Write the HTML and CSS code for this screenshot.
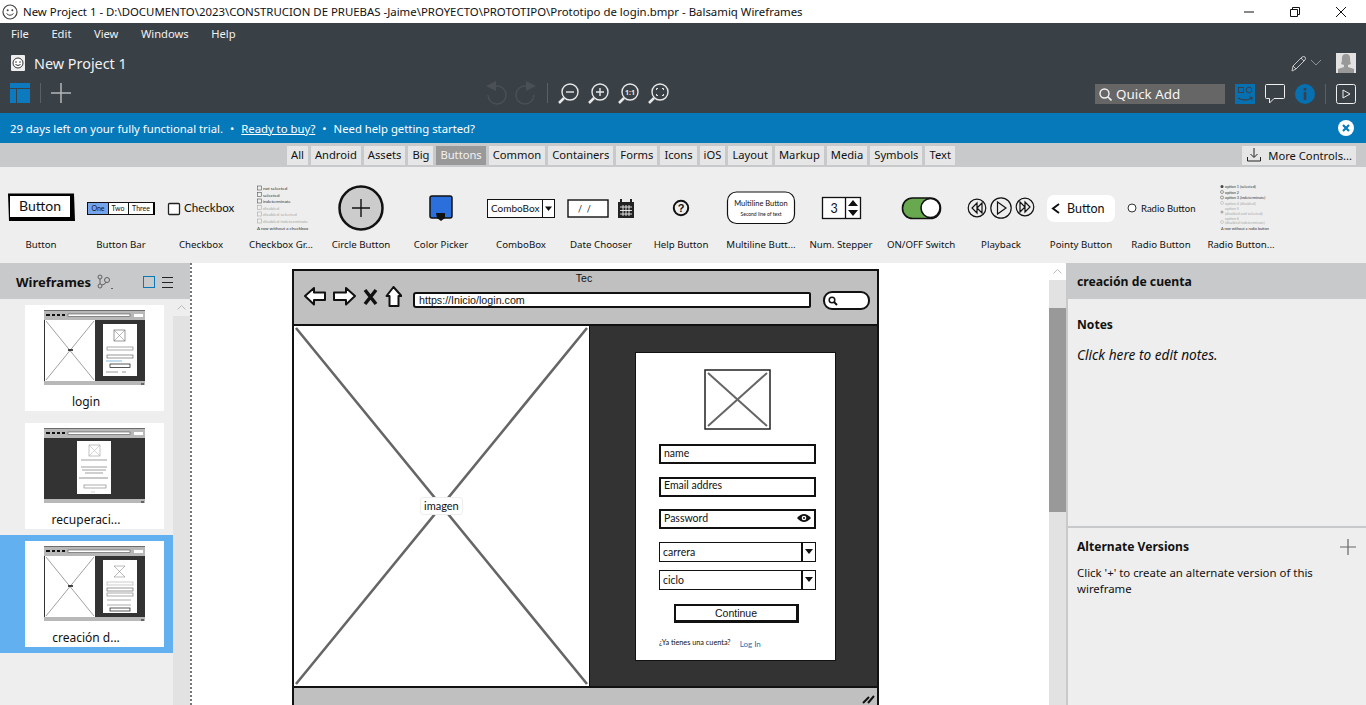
FILE: index.html
```html
<!DOCTYPE html>
<html lang="en">
<head>
    <meta charset="UTF-8">
    <meta name="viewport" content="width=device-width, initial-scale=1.0">
    <title>Balsamiq Wireframes</title>
    <link rel="stylesheet" href="styles.css">
</head>
<body>
    <!-- Window title -->
    <header class="titlebar">
        <svg class="title-icon" width="16" height="16" viewBox="0 0 16 16"><circle cx="8" cy="8" r="7" fill="#fff" stroke="#444" stroke-width="1.2"/><circle cx="5.7" cy="6.2" r="1" fill="#444"/><circle cx="10.3" cy="6.2" r="1" fill="#444"/><path d="M4.5 9.5q3.500 3.500 7 0" fill="none" stroke="#444"/></svg>
        <span class="title-text">New Project 1 - D:\DOCUMENTO\2023\CONSTRUCION DE PRUEBAS -Jaime\PROYECTO\PROTOTIPO\Prototipo de login.bmpr - Balsamiq Wireframes</span>
        <div class="window-btns">
            <svg width="12" height="12" viewBox="0 0 12 12"><path d="M1 6h10" stroke="#111" fill="none"/></svg>
            <svg width="12" height="12" viewBox="0 0 12 12"><path d="M1.500 3.500h7v7h-7zM3.500 3.500v-2h7v7h-2" stroke="#111" fill="none"/></svg>
            <svg width="12" height="12" viewBox="0 0 12 12"><path d="M1 1l10 10M11 1L1 11" stroke="#111" fill="none"/></svg>
        </div>
    </header>

    <!-- Dark app bar -->
    <section class="appbar">
        <nav class="menu">
            <span>File</span><span>Edit</span><span>View</span><span>Windows</span><span>Help</span>
        </nav>
        <div class="project-row">
            <svg width="14" height="16" viewBox="0 0 14 16"><rect x="0" y="0" width="14" height="16" rx="1" fill="#eee"/><circle cx="7" cy="8" r="5" fill="#fff" stroke="#333"/><circle cx="5" cy="7" r=".8" fill="#333"/><circle cx="9" cy="7" r=".8" fill="#333"/><path d="M4.500 9.500q2.500 2 5 0" fill="none" stroke="#333"/></svg>
            <span class="project-name">New Project 1</span>
            <div class="project-right">
                <svg width="16" height="17" viewBox="0 0 16 17"><path d="M1 16l1-5L11 2q2-1 3 0t0 3l-9 9zM2 11l3 3M10 3l3 3" fill="none" stroke="#c4c6c8"/></svg>
                <svg width="10" height="6" viewBox="0 0 10 6"><path d="M0 0l5 5 5-5" fill="none" stroke="#8d9195"/></svg>
                <svg class="avatar" width="20" height="20" viewBox="0 0 20 20"><rect width="20" height="20" fill="#e2e2e2"/><path d="M6 5q0-4 4-4t4 4q0 4 1 6l-3 1v2l6 2v4H2v-4l6-2v-2l-3-1q1-2 1-6z" fill="#999"/></svg>
            </div>
        </div>
        <div class="tool-row">
            <svg width="20" height="20" viewBox="0 0 20 20"><path d="M0 0h20v5H0zM0 6h6v14H0zM7 6h13v14H7z" fill="#0d7ac0"/></svg>
            <i class="sep"></i>
            <svg width="20" height="20" viewBox="0 0 20 20"><path d="M10 0v20M0 10h20" stroke="#b5b7b9" stroke-width="1.500"/></svg>
            <div class="history">
                <svg width="23" height="24" viewBox="0 0 23 24"><path d="M11 0v10L1 5z" fill="#4a5055"/><path d="M11 5a9 9 0 1 1-8 9" fill="none" stroke="#4a5055" stroke-width="1.500"/></svg>
                <svg width="23" height="24" viewBox="0 0 23 24"><path d="M12 0v10L22 5z" fill="#4a5055"/><path d="M12 5a9 9 0 1 0 8 9" fill="none" stroke="#4a5055" stroke-width="1.500"/></svg>
            </div>
            <i class="sep"></i>
            <div class="zooms">
                <svg width="21" height="21" viewBox="0 0 21 21"><circle cx="12" cy="9" r="8" fill="none" stroke="#e8e8e8" stroke-width="1.400"/><path d="M6 15l-5 5" stroke="#e8e8e8" stroke-width="2.500"/><path d="M8 9h8" stroke="#e8e8e8" stroke-width="1.400"/></svg>
                <svg width="21" height="21" viewBox="0 0 21 21"><circle cx="12" cy="9" r="8" fill="none" stroke="#e8e8e8" stroke-width="1.400"/><path d="M6 15l-5 5" stroke="#e8e8e8" stroke-width="2.500"/><path d="M8 9h8M12 5v8" stroke="#e8e8e8" stroke-width="1.400"/></svg>
                <svg width="21" height="21" viewBox="0 0 21 21"><circle cx="12" cy="9" r="8" fill="none" stroke="#e8e8e8" stroke-width="1.400"/><path d="M6 15l-5 5" stroke="#e8e8e8" stroke-width="2.500"/><text class="zoom-one" x="12" y="12" text-anchor="middle">1:1</text></svg>
                <svg width="21" height="21" viewBox="0 0 21 21"><circle cx="12" cy="9" r="8" fill="none" stroke="#e8e8e8" stroke-width="1.400"/><path d="M6 15l-5 5" stroke="#e8e8e8" stroke-width="2.500"/><path d="M8.500 7V5.500H10M14 5.500h1.500V7M15.500 11v1.500H14M10 12.500H8.500V11" fill="none" stroke="#e8e8e8"/></svg>
            </div>
            <div class="tool-right">
                <div class="quick-add">
                    <svg width="13" height="13" viewBox="0 0 13 13"><circle cx="5.500" cy="5.500" r="4.500" fill="none" stroke="#f2f2f2" stroke-width="1.400"/><path d="M8.800 8.800L12.500 12.500" stroke="#f2f2f2" stroke-width="1.600"/></svg>
                    <span>Quick Add</span>
                </div>
                <svg width="20" height="20" viewBox="0 0 20 20"><rect width="20" height="20" fill="#0670b0"/><rect x="3.500" y="3.500" width="5" height="5" fill="none" stroke="#39404a"/><circle cx="14" cy="6" r="2.800" fill="none" stroke="#39404a"/><path d="M3 14q7 4 14 0" fill="none" stroke="#39404a" stroke-width="1.300"/><path d="M14 13l3.500 0.500-1 3" fill="none" stroke="#39404a"/></svg>
                <svg width="20" height="20" viewBox="0 0 20 20"><path d="M1.500.5h17q1 0 1 1v12q0 1-1 1H9l-4.500 4.500v-4.500h-3q-1 0-1-1v-12q0-1 1-1z" fill="none" stroke="#f0f0f0"/></svg>
                <svg width="20" height="20" viewBox="0 0 20 20"><circle cx="10" cy="10" r="10" fill="#0670b0"/><rect x="8.700" y="8" width="2.600" height="8" fill="#39404a"/><rect x="8.700" y="4" width="2.600" height="2.600" fill="#39404a"/></svg>
                <i class="sep"></i>
                <svg width="20" height="20" viewBox="0 0 20 20"><rect x=".5" y=".5" width="19" height="19" rx="2" fill="none" stroke="#f0f0f0"/><path d="M7 6l7 4-7 4z" fill="none" stroke="#f0f0f0"/></svg>
            </div>
        </div>
    </section>

    <!-- Trial banner -->
    <section class="banner">
        <span>29 days left on your fully functional trial.</span>
        <span class="dot">•</span>
        <a class="buy-link">Ready to buy?</a>
        <span class="dot">•</span>
        <span>Need help getting started?</span>
        <svg class="banner-close" width="16" height="16" viewBox="0 0 16 16"><circle cx="8" cy="8" r="8" fill="#fff"/><path d="M5 5l6 6M11 5l-6 6" stroke="#0679bb" stroke-width="2.200"/></svg>
    </section>

    <!-- Library filter tabs -->
    <section class="filters">
        <div class="tabs">
            <span class="tab">All</span>
            <span class="tab">Android</span>
            <span class="tab">Assets</span>
            <span class="tab">Big</span>
            <span class="tab active">Buttons</span>
            <span class="tab">Common</span>
            <span class="tab">Containers</span>
            <span class="tab">Forms</span>
            <span class="tab">Icons</span>
            <span class="tab">iOS</span>
            <span class="tab">Layout</span>
            <span class="tab">Markup</span>
            <span class="tab">Media</span>
            <span class="tab">Symbols</span>
            <span class="tab">Text</span>
        </div>
        <span class="more-controls">
            <svg width="14" height="14" viewBox="0 0 14 14"><path d="M7 0v9M3.500 6L7 9.500 10.500 6M.5 9v4h13V9" fill="none" stroke="#222"/></svg>
            More Controls...
        </span>
    </section>

    <!-- Control library -->
    <section class="library">
        <div class="control">
            <svg width="80" height="54" viewBox="0 0 80 54"><path d="M7 12.500h66l1 27.500H8z" fill="#000"/><rect x="9" y="15" width="60" height="21" fill="#fff"/><text class="sk" x="39" y="30" font-size="14" text-anchor="middle">Button</text></svg>
            <span>Button</span>
        </div>
        <div class="control">
            <svg width="80" height="54" viewBox="0 0 80 54"><rect x="6.500" y="21.500" width="67" height="12" fill="#fff" stroke="#111"/><rect x="7" y="22" width="20" height="11" fill="#74a5ec"/><path d="M27.500 22v11M47.500 22v11" stroke="#111"/><path d="M73 22v12" stroke="#000" stroke-width="2"/><text class="sk" x="17" y="30" font-size="7" text-anchor="middle">One</text><text class="sk" x="37" y="30" font-size="7" text-anchor="middle">Two</text><text class="sk" x="60" y="30" font-size="7" text-anchor="middle">Three</text></svg>
            <span>Button Bar</span>
        </div>
        <div class="control">
            <svg width="80" height="54" viewBox="0 0 80 54"><rect x="7.500" y="22.500" width="11" height="11" rx="1" fill="#fff" stroke="#222" stroke-width="1.300"/><text class="sk" x="23" y="31" font-size="11.600">Checkbox</text></svg>
            <span>Checkbox</span>
        </div>
        <div class="control">
            <svg width="80" height="54" viewBox="0 0 80 54"><g class="tiny"><rect x="16.500" y="5" width="4" height="4" fill="none" stroke="#555" stroke-width=".6"/><text x="22" y="9">not selected</text><rect x="16.500" y="11.500" width="4" height="4" fill="none" stroke="#555" stroke-width=".6"/><text x="22" y="15.500">selected</text><rect x="16.500" y="18" width="4" height="4" fill="none" stroke="#555" stroke-width=".6"/><text x="22" y="22">indeterminate</text></g><g class="tiny faded"><rect x="16.500" y="24.500" width="4" height="4" fill="none" stroke="#aaa" stroke-width=".6"/><text x="22" y="28.500">disabled</text><rect x="16.500" y="31" width="4" height="4" fill="none" stroke="#aaa" stroke-width=".6"/><text x="22" y="35">disabled selected</text><rect x="16.500" y="38" width="4" height="4" fill="none" stroke="#aaa" stroke-width=".6"/><text x="22" y="42">disabled indeterminate</text></g><g class="tiny"><text x="16" y="49">A row without a checkbox</text></g></svg>
            <span>Checkbox Gr...</span>
        </div>
        <div class="control">
            <svg width="80" height="54" viewBox="0 0 80 54"><circle cx="40" cy="27" r="21.500" fill="#ccc" stroke="#111" stroke-width="2.500"/><path d="M40 18v18M31 27h18" stroke="#111" stroke-width="1.400"/></svg>
            <span>Circle Button</span>
        </div>
        <div class="control">
            <svg width="80" height="54" viewBox="0 0 80 54"><rect x="29" y="15" width="22" height="22" rx="2" fill="#2a6fdc" stroke="#111" stroke-width="1.500"/><path d="M35 32h9v5l-4 3-4-3z" fill="#111"/></svg>
            <span>Color Picker</span>
        </div>
        <div class="control">
            <svg width="80" height="54" viewBox="0 0 80 54"><rect x="6.500" y="18.500" width="67" height="18" fill="#fff" stroke="#111"/><path d="M61.500 18v19" stroke="#111"/><path d="M64 25.500h7L67.500 30z" fill="#111"/><text class="sk" x="10" y="31" font-size="10">ComboBox</text></svg>
            <span>ComboBox</span>
        </div>
        <div class="control">
            <svg width="80" height="54" viewBox="0 0 80 54"><rect x="7" y="19" width="40" height="17" fill="#fff" stroke="#111" stroke-width="1.400"/><text class="sk" x="17" y="31" font-size="9">/&#160;&#160;/</text><path d="M57 21h16v16H57z" fill="#222"/><path d="M60 18v4M70 18v4" stroke="#222" stroke-width="2"/><path d="M59 26h12M59 29.500h12M59 33h12M62 24v11M65 24v11M68 24v11" stroke="#eee" stroke-width=".9"/></svg>
            <span>Date Chooser</span>
        </div>
        <div class="control">
            <svg width="80" height="54" viewBox="0 0 80 54"><circle cx="40" cy="27" r="7.200" fill="none" stroke="#111" stroke-width="2"/><text class="help-mark" x="40" y="31" text-anchor="middle">?</text></svg>
            <span>Help Button</span>
        </div>
        <div class="control">
            <svg width="80" height="54" viewBox="0 0 80 54"><rect x="6.500" y="11" width="67" height="31.500" rx="9" fill="#fff" stroke="#111" stroke-width="1.200"/><text class="sk" x="40" y="25" font-size="7.500" text-anchor="middle">Multiline Button</text><text class="sk" x="40" y="35" font-size="5" text-anchor="middle">Second line of text</text></svg>
            <span>Multiline Butt...</span>
        </div>
        <div class="control">
            <svg width="80" height="54" viewBox="0 0 80 54"><rect x="21.500" y="16.500" width="38" height="21" fill="#fff" stroke="#111" stroke-width="1.300"/><path d="M44.500 16v22" stroke="#111" stroke-width="1.300"/><text class="sk" x="33" y="32" font-size="12.500" text-anchor="middle">3</text><path d="M47 25l5-6 5 6zM47 29l5 6 5-6z" fill="#111"/></svg>
            <span>Num. Stepper</span>
        </div>
        <div class="control">
            <svg width="80" height="54" viewBox="0 0 80 54"><rect x="21.500" y="17" width="38" height="20.500" rx="10" fill="#68a84f" stroke="#111" stroke-width="1.600"/><circle cx="49.500" cy="27" r="9.500" fill="#fff" stroke="#111" stroke-width="1.600"/></svg>
            <span>ON/OFF Switch</span>
        </div>
        <div class="control">
            <svg width="80" height="54" viewBox="0 0 80 54"><g fill="none" stroke="#111" stroke-width="1.200"><circle cx="16" cy="27" r="8.800"/><circle cx="40" cy="27" r="10.200"/><circle cx="64" cy="26" r="8.800"/><path d="M36.500 21l8.500 6-8.500 6z"/><path d="M16 22l-5 5 5 5zM21 22l-5 5 5 5zM59 21l5 5-5 5zM64 21l5 5-5 5z"/></g></svg>
            <span>Playback</span>
        </div>
        <div class="control">
            <svg width="80" height="54" viewBox="0 0 80 54"><rect x="6" y="14" width="68" height="27" rx="7" fill="#fff"/><path d="M18 23l-6 4.500 6 4.500" fill="none" stroke="#111" stroke-width="2"/><text class="sk" x="26" y="31.500" font-size="12.500">Button</text></svg>
            <span>Pointy Button</span>
        </div>
        <div class="control">
            <svg width="80" height="54" viewBox="0 0 80 54"><circle cx="11" cy="27" r="4" fill="#fff" stroke="#333"/><text class="sk" x="20" y="30.500" font-size="9.500" fill="#333">Radio Button</text></svg>
            <span>Radio Button</span>
        </div>
        <div class="control">
            <svg width="80" height="54" viewBox="0 0 80 54"><g class="tiny micro"><circle cx="21" cy="5.500" r="1.500" fill="#444"/><text x="24" y="7">option 1 (selected)</text><circle cx="21" cy="11" r="1.500" fill="none" stroke="#444" stroke-width=".5"/><text x="24" y="12.500">option 2</text><circle cx="21" cy="16.500" r="1.500" fill="none" stroke="#444" stroke-width=".5"/><text x="24" y="18">option 3 (indeterminate)</text></g><g class="tiny micro faded"><circle cx="21" cy="22" r="1.500" fill="none" stroke="#aaa" stroke-width=".5"/><text x="24" y="23.500">option 4 (disabled)</text><circle cx="21" cy="31" r="1.500" fill="#aaa"/><text x="24" y="29">option 5</text><text x="24" y="33.500">(disabled and selected)</text><circle cx="21" cy="41" r="1.500" fill="none" stroke="#aaa" stroke-width=".5"/><text x="24" y="38.500">option 6</text><text x="24" y="43">(disabled indeterminate)</text></g><g class="tiny micro"><text x="20" y="49">A row without a radio button</text></g></svg>
            <span>Radio Button...</span>
        </div>
    </section>

    <main class="workspace">
        <!-- Wireframes list -->
        <aside class="left-panel">
            <div class="panel-head">
                <strong>Wireframes</strong>
                <svg class="branch" width="17" height="16" viewBox="0 0 17 16"><g fill="none" stroke="#555" stroke-width=".9"><circle cx="3" cy="3" r="2"/><circle cx="3" cy="12" r="2"/><circle cx="10" cy="6" r="2.500"/><path d="M3 5v5M5 11q4-1 4-3M14 14l1 1 1-1"/></g></svg>
                <span class="head-right">
                    <svg width="12" height="12" viewBox="0 0 12 12"><rect x=".5" y=".5" width="11" height="11" fill="none" stroke="#0679bb"/></svg>
                    <svg width="11" height="11" viewBox="0 0 11 11"><path d="M0 .5h11M0 5.500h11M0 10.500h11" stroke="#222"/></svg>
                </span>
            </div>
            <div class="panel-body">
                <div class="thumb-list">
                    <div class="thumb-row">
                        <div class="thumb">
                            <svg width="101" height="75" viewBox="0 0 101 75"><use href="#mini-top"/><rect y="10" width="101" height="61" fill="#333"/><rect x="1" y="10" width="50" height="61" fill="#fff"/><path d="M2 11l48 59M50 11L2 70" stroke="#777" stroke-width=".7"/><path d="M24 40h5" stroke="#111" stroke-width="1.500"/><rect x="59" y="14" width="34" height="52" fill="#fff"/><rect x="70" y="20" width="11" height="11" fill="#fff" stroke="#555" stroke-width=".6"/><path d="M70 20l11 11M81 20L70 31" stroke="#777" stroke-width=".5"/><rect x="63" y="37" width="26" height="3" fill="#fff" stroke="#555" stroke-width=".5"/><rect x="63" y="45" width="26" height="3" fill="#fff" stroke="#333" stroke-width=".5"/><path d="M62 51h16" stroke="#0679bb" stroke-width=".5"/><rect x="66" y="54" width="20" height="3.500" fill="#fff" stroke="#111" stroke-width=".7"/><path d="M62 62h12M78 62h4" stroke="#555" stroke-width=".6"/><use href="#mini-foot"/></svg>
                        </div>
                        <p>login</p>
                    </div>
                    <div class="thumb-row">
                        <div class="thumb">
                            <svg width="101" height="75" viewBox="0 0 101 75"><use href="#mini-top"/><rect y="10" width="101" height="61" fill="#333"/><rect x="33" y="13" width="34" height="53" fill="#fff"/><rect x="45" y="17" width="11" height="11" fill="#fff" stroke="#888" stroke-width=".5"/><path d="M45 17l11 11M56 17L45 28" stroke="#aaa" stroke-width=".5"/><path d="M37 32h26M37 39h26M38 42h24M41 45h18" stroke="#777" stroke-width=".7"/><path d="M35 50h29" stroke="#777" stroke-width=".8"/><rect x="40" y="57" width="22" height="3" fill="#fff" stroke="#777" stroke-width=".6"/><path d="M47 64h4" stroke="#bbb" stroke-width=".6"/><use href="#mini-foot"/></svg>
                        </div>
                        <p>recuperaci...</p>
                    </div>
                    <div class="thumb-row selected">
                        <div class="thumb">
                            <svg width="101" height="75" viewBox="0 0 101 75"><use href="#mini-top"/><rect y="10" width="101" height="61" fill="#333"/><rect x="1" y="10" width="50" height="61" fill="#fff"/><path d="M2 11l48 59M50 11L2 70" stroke="#777" stroke-width=".7"/><path d="M24 40h5" stroke="#111" stroke-width="1.500"/><rect x="59" y="14" width="34" height="53" fill="#fff"/><path d="M70 20l11 11M81 20L70 31M70 20h11M70 31h11" stroke="#777" stroke-width=".5"/><rect x="63" y="36" width="26" height="3" fill="#fff" stroke="#999" stroke-width=".5"/><rect x="63" y="42" width="26" height="3" fill="#fff" stroke="#333" stroke-width=".5"/><rect x="63" y="47" width="26" height="3" fill="#fff" stroke="#555" stroke-width=".5"/><path d="M63 54h24M63 59h24" stroke="#555" stroke-width=".5"/><rect x="66" y="62" width="20" height="3" fill="#fff" stroke="#111" stroke-width=".7"/><use href="#mini-foot"/></svg>
                        </div>
                        <p>creación d...</p>
                    </div>
                </div>
                <div class="list-scroll"><span class="scroll-up">
                    <svg width="9" height="5" viewBox="0 0 9 5"><path d="M.5 4.500l4-4 4 4" fill="none" stroke="#bbb"/></svg>
                </span></div>
            </div>
        </aside>

        <!-- Canvas with the open wireframe -->
        <section class="canvas">
            <div class="browser">
                <div class="browser-top">
                    <span class="browser-title">Tec</span>
                    <div class="browser-nav">
                        <svg width="98" height="22" viewBox="0 0 98 22"><g fill="#fff" stroke="#111" stroke-width="2" stroke-linejoin="round"><path d="M1 10L10 2v4.500h11v7.500H10v4.500z"/><path d="M51 10L42 2v4.500H30v7.500h12v4.500z"/><path d="M89.500 1l8 9h-3v10h-9V10h-3z"/></g><path d="M61 4l11 14M72 4L61 18" stroke="#111" stroke-width="3.500"/></svg>
                        <div class="url-box">https://Inicio/login.com</div>
                        <div class="search-pill">
                            <svg width="10" height="10" viewBox="0 0 10 10"><circle cx="4" cy="4" r="2.800" fill="none" stroke="#111" stroke-width="1.500"/><path d="M6 6l3 3" stroke="#111" stroke-width="2"/></svg>
                        </div>
                    </div>
                </div>
                <div class="browser-body">
                    <div class="hero">
                        <svg class="cross" viewBox="0 0 296 362" preserveAspectRatio="none"><path d="M2 2l292 358M294 2L2 360" stroke="#666" stroke-width="2.600" fill="none"/></svg>
                        <span class="hero-label">imagen</span>
                    </div>
                    <div class="dark-side">
                        <div class="form-card">
                            <svg class="logo-box" width="67" height="61" viewBox="0 0 67 61"><rect x="1" y="1" width="65" height="59" fill="#fff" stroke="#222" stroke-width="1.500"/><path d="M4 4l59 53M63 4L4 57" stroke="#666" stroke-width="2"/></svg>
                            <div class="sk-field">name</div>
                            <div class="sk-field">Email addres</div>
                            <div class="sk-field">Password
                                <svg width="14" height="10" viewBox="0 0 14 10"><path d="M0 5q7-8 14 0-7 8-14 0z" fill="#111"/><circle cx="7" cy="5" r="2.300" fill="#fff"/><circle cx="7" cy="5" r="1" fill="#111"/></svg>
                            </div>
                            <div class="sk-select first">carrera<b><i></i></b></div>
                            <div class="sk-select">ciclo<b><i></i></b></div>
                            <div class="sk-button">Continue</div>
                            <div class="login-row"><span>¿Ya tienes una cuenta?</span><a>Log In</a></div>
                        </div>
                    </div>
                </div>
                <div class="browser-foot">
                    <svg width="13" height="10" viewBox="0 0 13 10"><path d="M1 9l6-6M6 9l6-7" stroke="#111" stroke-width="2"/></svg>
                </div>
            </div>
        </section>

        <div class="canvas-scroll">
            <span class="scroll-up canvas-up">
                <svg width="9" height="5" viewBox="0 0 9 5"><path d="M.5 4.500l4-4 4 4" fill="none" stroke="#bbb"/></svg>
            </span>
            <span class="scroll-thumb"></span>
        </div>

        <!-- Notes panel -->
        <aside class="right-panel">
            <div class="panel-head right-head"><strong>creación de cuenta</strong></div>
            <div class="notes">
                <h4>Notes</h4>
                <em>Click here to edit notes.</em>
            </div>
            <div class="versions">
                <h4>Alternate Versions
                    <svg width="16" height="16" viewBox="0 0 16 16"><path d="M8 0v16M0 8h16" stroke="#666" stroke-width="1.200"/></svg>
                </h4>
                <p>Click '+' to create an alternate version of this wireframe</p>
            </div>
        </aside>
    </main>

    <!-- Shared bits of the small previews -->
    <svg class="defs" width="0" height="0">
        <defs>
            <g id="mini-top"><rect width="101" height="10" fill="#b8b8b8"/><path d="M0 0h101" stroke="#222"/><path d="M2 5h4M8 5h3M13 5h3M18 5h3" stroke="#111" stroke-width="2"/><rect x="24" y="4" width="62" height="2.500" fill="#fff" stroke="#333" stroke-width=".5"/><rect x="90" y="4" width="9" height="3" fill="#fff"/></g>
            <g id="mini-foot"><rect y="71" width="101" height="4" fill="#b8b8b8"/><path d="M97 74h3" stroke="#111"/></g>
        </defs>
    </svg>
</body>
</html>
```

FILE: styles.css
```css
/* Body Styling */
html, body {
    margin: 0;
    padding: 0;
}

body {
    width: 1366px;
    height: 705px;
    overflow: hidden;
    font-family: 'Noto Sans', 'Open Sans', sans-serif;
    font-size: 12px;
    color: #111;
    background: #fff;
}

svg {
    display: block;
    flex: none;
}

.defs {
    position: absolute;
}

/* Title bar */
.titlebar {
    display: flex;
    align-items: center;
    height: 23px;
    padding-left: 2px;
    background: #fff;
}

.title-icon {
    margin-right: 5px;
}

.title-text {
    font-size: 11.4px;
    white-space: nowrap;
}

.window-btns {
    display: flex;
    gap: 34px;
    margin-left: auto;
    padding-right: 19px;
}

/* App bar */
.appbar {
    height: 90px;
    background: #394046;
    color: #f2f2f2;
}

.menu {
    display: flex;
    gap: 22.500px;
    height: 20px;
    align-items: center;
    padding-left: 11px;
    font-size: 11.2px;
}

.project-row {
    display: flex;
    align-items: center;
    gap: 9px;
    height: 40px;
    padding: 0 10px 0 11px;
}

.project-name {
    font-size: 14.400px;
}

.project-right {
    display: flex;
    align-items: center;
    gap: 4px;
    margin-left: auto;
}

.avatar {
    margin-left: 11px;
}

.tool-row {
    display: flex;
    align-items: center;
    height: 20px;
    padding: 0 10px;
}

.sep {
    display: block;
    width: 1px;
    height: 20px;
    margin: 0 10px;
    background: #5a6066;
}

.history {
    display: flex;
    gap: 6px;
    margin-left: 414px;
}

.zooms {
    display: flex;
    gap: 9px;
}

.zoom-one {
    font-size: 7px;
    font-weight: 700;
    fill: #e8e8e8;
}

.tool-right {
    display: flex;
    align-items: center;
    gap: 10px;
    margin-left: auto;
    margin-top: 2px;
}

.tool-right .sep {
    margin: 0;
}

.quick-add {
    display: flex;
    align-items: center;
    gap: 4px;
    width: 130px;
    height: 20px;
    padding-left: 4px;
    box-sizing: border-box;
    background: #666;
    font-size: 13.400px;
    color: #f6f6f6;
}

/* Banner */
.banner {
    display: flex;
    align-items: center;
    height: 30px;
    padding: 0 12px 0 10px;
    background: #0679bb;
    color: #fff;
    font-size: 11.300px;
}

.dot {
    margin: 0 7px;
}

.buy-link {
    text-decoration: underline;
}

.banner-close {
    margin-left: auto;
}

/* Filter tabs */
.filters {
    position: relative;
    display: flex;
    align-items: center;
    justify-content: flex-end;
    height: 24px;
    padding-right: 10px;
    background: #c8c9cb;
}

.tabs {
    position: absolute;
    left: 287px;
    top: 3px;
    display: flex;
    gap: 3px;
}

.tab {
    display: block;
    height: 19px;
    line-height: 18px;
    padding: 0 4px;
    background: #e6e6e6;
    font-size: 11.200px;
}

.tab.active {
    background: #999;
    color: #f2f2f2;
}

.more-controls {
    display: flex;
    align-items: center;
    gap: 7px;
    height: 19px;
    padding: 0 4px 0 5px;
    background: #e6e6e6;
    font-size: 11.200px;
}

/* Control library */
.library {
    display: grid;
    grid-template-columns: repeat(16, 80px);
    height: 96px;
    padding-left: 1px;
    background: #eee;
}

.control {
    display: flex;
    flex-direction: column;
    align-items: center;
    padding-top: 14px;
}

.control span {
    height: 16px;
    line-height: 17px;
    margin-top: 1px;
    font-size: 9.700px;
    white-space: nowrap;
}

.sk {
    font-family: 'Lato', sans-serif;
    fill: #111;
}

.help-mark {
    font-family: 'Liberation Sans', sans-serif;
    font-size: 11px;
    font-weight: 700;
    fill: #111;
}

.tiny text {
    font-family: 'Lato', sans-serif;
    font-size: 4.500px;
    fill: #333;
}

.faded text {
    fill: #aaa;
}

.micro text {
    font-size: 3.800px;
}

/* Workspace */
.workspace {
    display: flex;
    height: 442px;
    overflow: hidden;
}

.panel-head {
    display: flex;
    align-items: center;
    height: 36px;
    background: #c8c9cb;
    flex: none;
}

.panel-head strong {
    font-size: 13px;
}

/* Left panel */
.left-panel {
    display: flex;
    flex-direction: column;
    width: 190px;
    flex: none;
    border-right: 2px dotted #777;
}

.left-panel .panel-head {
    padding: 2px 17px 0 16px;
    box-sizing: border-box;
}

.branch {
    margin-left: 6px;
}

.head-right {
    display: flex;
    align-items: center;
    gap: 7px;
    margin-left: auto;
}

.panel-body {
    display: flex;
    flex: 1;
    background: #eee;
}

.thumb-list {
    width: 173px;
    padding-top: 6px;
}

.thumb-row {
    position: relative;
    padding: 0 9px 0 25px;
    margin-bottom: 12px;
}

.thumb-row.selected {
    padding-top: 6px;
    padding-bottom: 6px;
    margin-top: -6px;
    background: #63b0f0;
}

.thumb {
    display: flex;
    justify-content: center;
    padding-top: 5px;
    height: 101px;
    background: #fff;
}

.thumb-row p {
    position: absolute;
    left: 25px;
    width: 122px;
    margin: 0;
    bottom: 1px;
    text-align: center;
    font-size: 12px;
    line-height: 16px;
}

.thumb-row.selected p {
    bottom: 7px;
}

.list-scroll {
    width: 17px;
    background: #e2e2e2;
}

.scroll-up {
    display: flex;
    align-items: center;
    justify-content: center;
    height: 17px;
    background: #eee;
}

/* Canvas */
.canvas {
    position: relative;
    flex: 1;
    background: #fff;
    overflow: hidden;
}

.browser {
    position: absolute;
    left: 100px;
    top: 6px;
    width: 583px;
    height: 434px;
    border: 2px solid #111;
    border-bottom: 0;
    background: #c0c0c0;
    display: flex;
    flex-direction: column;
}

.browser-top {
    height: 53px;
    border-bottom: 2px solid #111;
    flex: none;
}

.browser-title {
    display: block;
    padding: 1px 3px 0 0;
    text-align: center;
    font-family: 'Liberation Sans', sans-serif;
    font-size: 10.500px;
    line-height: 12px;
}

.browser-nav {
    display: flex;
    align-items: flex-start;
    margin-top: 2px;
    padding-left: 10px;
}

.url-box {
    width: 390px;
    height: 12px;
    margin: 6px 0 0 11px;
    padding-left: 4px;
    border: 2px solid #111;
    border-radius: 3px 2px 2px 3px;
    background: #fff;
    font-family: 'Liberation Sans', sans-serif;
    font-size: 10.700px;
    line-height: 12px;
}

.search-pill {
    display: flex;
    align-items: center;
    width: 40px;
    height: 15px;
    margin: 5px 0 0 12px;
    padding-left: 3px;
    border: 2px solid #111;
    border-radius: 9px;
    background: #fff;
}

.browser-body {
    display: flex;
    flex: 1;
    min-height: 0;
    background: #333;
}

.hero {
    position: relative;
    width: 295px;
    flex: none;
    background: #fff;
    border-right: 1px solid #111;
}

.cross {
    display: block;
    width: 100%;
    height: 100%;
}

.hero-label {
    position: absolute;
    left: 126px;
    top: 171px;
    padding: 0 3px;
    height: 16px;
    line-height: 15px;
    background: #fff;
    border: 1px solid #eee;
    border-radius: 3px;
    font-family: 'Lato', sans-serif;
    font-size: 11px;
}

.dark-side {
    flex: 1;
    padding: 26px 0 0 45px;
}

.form-card {
    width: 201px;
    height: 309px;
    border: 1px solid #111;
    background: #fff;
    box-sizing: border-box;
    padding-top: 16px;
    font-family: 'Lato', sans-serif;
    font-size: 10.500px;
}

.logo-box {
    margin: 0 0 14px 68px;
}

.sk-field, .sk-select {
    display: flex;
    align-items: center;
    justify-content: space-between;
    box-sizing: border-box;
    width: 157px;
    height: 20px;
    margin: 0 0 12.500px 23px;
    padding: 0 0 3px 3px;
    border: 2px solid #111;
    background: #fff;
    line-height: 12px;
}

.sk-field svg {
    margin-right: 3px;
}

.sk-select {
    margin-bottom: 8px;
    padding-bottom: 0;
    border-width: 1.500px;
}

.sk-select.first {
    margin-top: 1.500px;
}

.sk-select b {
    display: flex;
    align-items: center;
    justify-content: center;
    align-self: stretch;
    width: 12px;
    border-left: 2px solid #111;
}

.sk-select i {
    border: 4px solid transparent;
    border-top: 5px solid #111;
    border-bottom: 0;
}

.sk-button {
    box-sizing: border-box;
    width: 125px;
    height: 19px;
    margin: 14px 0 0 38px;
    border: 2px solid #111;
    border-bottom-width: 3px;
    border-right-width: 3px;
    background: #fff;
    text-align: center;
    font-family: 'Liberation Sans', sans-serif;
    font-size: 10.500px;
    line-height: 15px;
}

.login-row {
    display: flex;
    align-items: center;
    gap: 9px;
    margin: 14px 0 0 23px;
    font-size: 7.300px;
}

.login-row a {
    color: #1a6fb0;
    font-size: 8px;
    padding-top: 2px;
}

.browser-foot {
    display: flex;
    align-items: flex-end;
    justify-content: flex-end;
    flex: none;
    height: 16px;
    border-top: 2px solid #111;
    padding: 0 2px 1px 0;
}

/* Canvas scrollbar */
.canvas-scroll {
    width: 17px;
    flex: none;
    background: #e2e2e2;
    border-right: 2px solid #c8c9cb;
}

.canvas-up {
    background: #fff;
}

.scroll-thumb {
    display: block;
    height: 204px;
    margin-top: 28px;
    background: #999;
}

/* Right panel */
.right-panel {
    display: flex;
    flex-direction: column;
    width: 298px;
    flex: none;
    background: #eee;
}

.right-head {
    padding-left: 9px;
}

.right-head strong {
    font-size: 12.200px;
}

.notes {
    height: 229px;
    padding: 17px 9px 0;
    border-bottom: 2px solid #c8c9cb;
    flex: none;
    box-sizing: border-box;
}

.right-panel h4 {
    display: flex;
    align-items: center;
    justify-content: space-between;
    margin: 0;
    font-size: 12.100px;
    line-height: 17px;
}

.notes em {
    display: block;
    margin-top: 13px;
    font-size: 13.700px;
    line-height: 17px;
}

.versions {
    padding: 10px 10px 0 9px;
}

.versions p {
    margin: 10px 0 0;
    font-size: 11.400px;
    line-height: 16px;
}
```
